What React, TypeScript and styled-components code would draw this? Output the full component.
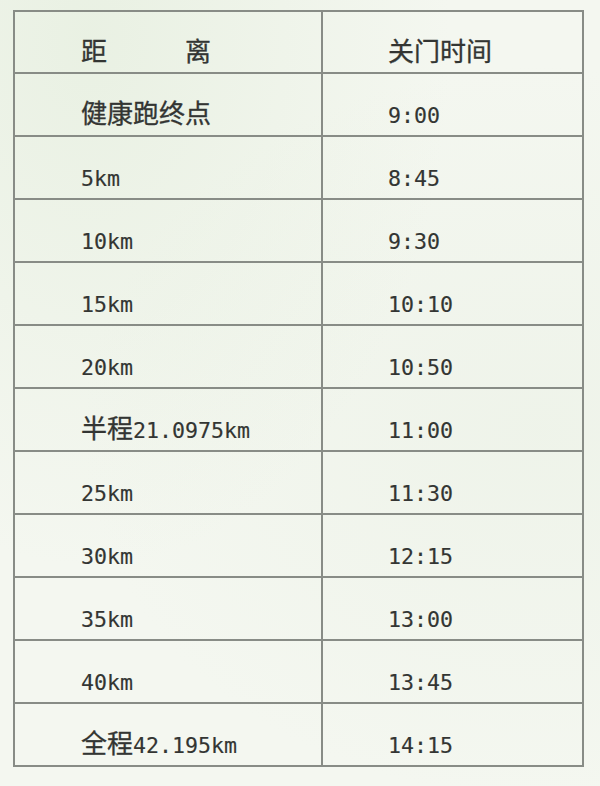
import styled, { createGlobalStyle } from "styled-components";

const GlobalStyle = createGlobalStyle`
  html, body {
    margin: 0;
    padding: 0;
  }
  body {
    width: 600px;
    height: 786px;
    overflow: hidden;
    background:
      radial-gradient(ellipse at 15% 5%, rgba(220, 233, 211, 0.45) 0%, rgba(220, 233, 211, 0) 50%),
      radial-gradient(ellipse at 90% 55%, rgba(230, 238, 224, 0.4) 0%, rgba(230, 238, 224, 0) 60%),
      #f4f7f0;
  }
`;

const Page = styled.div`
  padding: 10px 0 0 13px;
  font-family: "Noto Sans CJK SC", "Noto Sans", sans-serif;
  color: #333533;
`;

const Table = styled.div`
  width: 571px;
  box-sizing: border-box;
  border: 2px solid #888c86;
`;

const Row = styled.div`
  display: grid;
  grid-template-columns: 308px 1fr;
  height: 61px;
  &:first-child {
    height: 60px;
  }
  & + & {
    border-top: 2px solid #888c86;
  }
`;

const Cell = styled.div<{ $divider?: boolean }>`
  padding: 25px 0 0 ${(p) => (p.$divider ? "66px" : "65px")};
  font-size: 26px;
  line-height: 26px;
  white-space: nowrap;
  -webkit-text-stroke: 0.3px currentColor;
  border-right: ${(p) => (p.$divider ? "2px solid #888c86" : "none")};
`;

const Latin = styled.span`
  font-family: "DejaVu Sans Mono", "Liberation Mono", monospace;
  font-size: 21.6px;
  -webkit-text-stroke: 0.15px currentColor;
`;

const SpacedLabel = styled.span`
  letter-spacing: 3em;
`;

const rows: [string, string][] = [
  ["健康跑终点", "9:00"],
  ["5km", "8:45"],
  ["10km", "9:30"],
  ["15km", "10:10"],
  ["20km", "10:50"],
  ["半程21.0975km", "11:00"],
  ["25km", "11:30"],
  ["30km", "12:15"],
  ["35km", "13:00"],
  ["40km", "13:45"],
  ["全程42.195km", "14:15"],
];

// wrap ASCII runs so Latin text gets half-width monospace glyphs
function MixedText({ text }: { text: string }) {
  const parts = text.split(/([\x20-\x7e]+)/).filter(Boolean);
  return (
    <>
      {parts.map((part, i) =>
        /^[\x20-\x7e]+$/.test(part) ? <Latin key={i}>{part}</Latin> : <span key={i}>{part}</span>
      )}
    </>
  );
}

export default function App() {
  return (
    <>
      <GlobalStyle />
      <Page>
        <Table>
          <Row>
            <Cell $divider>
              <SpacedLabel>距离</SpacedLabel>
            </Cell>
            <Cell>关门时间</Cell>
          </Row>
          {rows.map(([distance, time]) => (
            <Row key={distance}>
              <Cell $divider>
                <MixedText text={distance} />
              </Cell>
              <Cell>
                <MixedText text={time} />
              </Cell>
            </Row>
          ))}
        </Table>
      </Page>
    </>
  );
}
